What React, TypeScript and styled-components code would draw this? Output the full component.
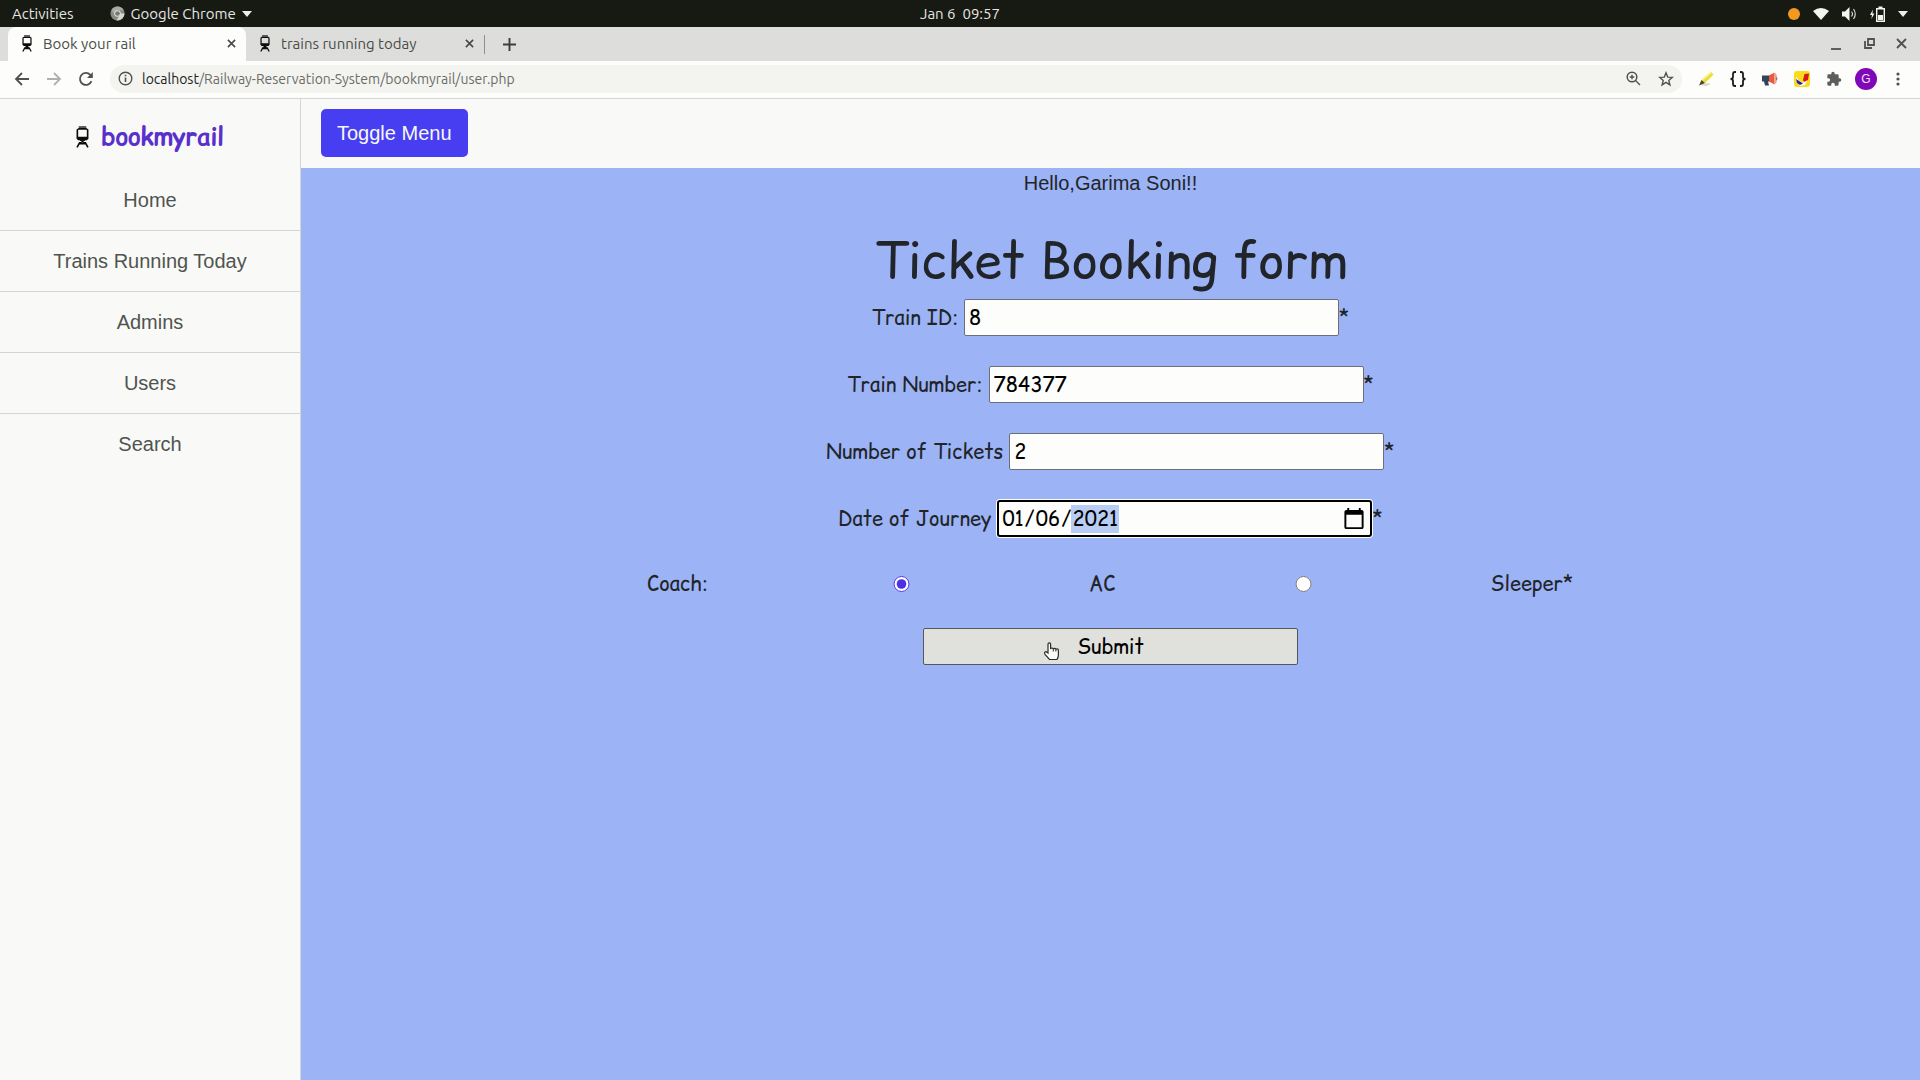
import React from 'react';
import styled, { createGlobalStyle, css } from 'styled-components';

const ui = `Ubuntu, "Noto Sans", sans-serif`;
const sans = `Arial, "Liberation Sans", sans-serif`;
const comic = `"Comic Relief", "Comic Neue", Lato, sans-serif`;

const GlobalStyle = createGlobalStyle`
  *, *::before, *::after { box-sizing: border-box; }
  body { margin: 0; }
`;

const Screen = styled.div`
  display: flex;
  flex-direction: column;
  min-height: 100vh;
  font-family: ${ui};
`;

/* ---------- desktop bar ---------- */

const DesktopBar = styled.header`
  display: grid;
  grid-template-columns: 1fr auto 1fr;
  align-items: center;
  height: 27px;
  padding: 0 12px;
  background: #171913;
  color: #e6e6e2;
  font-size: 15px;
`;

const BarGroup = styled.div<{ $end?: boolean; $gap: number }>`
  display: flex;
  align-items: center;
  justify-content: ${p => (p.$end ? 'flex-end' : 'flex-start')};
  gap: ${p => p.$gap}px;
`;

const BarButton = styled.button`
  display: flex;
  align-items: center;
  gap: 6px;
  padding: 0;
  border: 0;
  background: none;
  color: inherit;
  font: inherit;
  white-space: pre;
`;

/* ---------- browser ---------- */

const TabStrip = styled.div`
  display: flex;
  align-items: center;
  height: 34px;
  padding: 0 10px 0 8px;
  background: #dddedb;
`;

const Tab = styled.div<{ $active?: boolean }>`
  display: flex;
  align-items: center;
  gap: 11px;
  width: 238px;
  height: 34px;
  padding: 0 10px 2px 14px;
  border-radius: 8px 8px 0 0;
  background: ${p => (p.$active ? '#fdfdfb' : 'transparent')};
  color: #4a4c48;
  font-size: 15px;
`;

const TabTitle = styled.span`
  flex: 1;
  white-space: nowrap;
`;

const TabDivider = styled.span`
  width: 1px;
  height: 19px;
  background: #8e908c;
`;

const IconButton = styled.button`
  display: flex;
  align-items: center;
  justify-content: center;
  flex: none;
  padding: 0;
  border: 0;
  background: none;
  color: #50524e;
`;

const NewTab = styled(IconButton)`
  width: 24px;
  margin-left: 12px;
`;

const WindowButtons = styled.div`
  display: flex;
  gap: 17px;
  margin-left: auto;
`;

const Toolbar = styled.div`
  display: flex;
  align-items: center;
  gap: 16px;
  height: 38px;
  padding: 0 14px 2px;
  border-bottom: 1px solid #d5d6d2;
  background: #fdfdfb;
`;

const Address = styled.div`
  display: flex;
  align-items: center;
  flex: 1;
  gap: 17px;
  height: 28px;
  padding: 0 8px;
  border-radius: 14px;
  background: #f3f4f0;
`;

const Url = styled.span`
  flex: 1;
  margin-left: -8px;
  color: #6a6c68;
  font-size: 14px;

  b {
    color: #20221e;
    font-weight: 400;
  }
`;

const Avatar = styled.button`
  width: 22px;
  height: 22px;
  margin: 0 -3px;
  padding: 0;
  border: 0;
  border-radius: 50%;
  background: #8108b8;
  color: #f0e2f6;
  font: 12px/22px ${sans};
`;

/* ---------- page ---------- */

const Page = styled.div`
  display: flex;
  flex: 1;
  color: #212529;
  font-family: ${sans};
  font-size: 20px;
  line-height: 30px;
`;

const Sidebar = styled.aside`
  flex: none;
  width: 301px;
  border-right: 1px solid #d3d6d6;
  background: #f9faf7;
`;

const Brand = styled.div`
  display: flex;
  align-items: center;
  justify-content: center;
  gap: 12px;
  height: 71px;
  padding-top: 4px;
  color: #5930cc;
  font: 700 24px/36px ${comic};
`;

const NavLink = styled.a`
  display: block;
  padding: 15px 20px;
  border-bottom: 1px solid #d3d6d6;
  color: #50544f;
  text-align: center;
  text-decoration: none;

  &:last-child { border-bottom: 0; }
`;

const Main = styled.div`
  display: flex;
  flex: 1;
  flex-direction: column;
  min-width: 0;
  background: #9cb3f6;
`;

const TopNav = styled.nav`
  display: flex;
  align-items: center;
  height: 69px;
  padding: 0 20px 1px;
  background: #f9faf7;
`;

const ToggleButton = styled.button`
  height: 48px;
  padding: 0 16px;
  border: 0;
  border-radius: 5px;
  background: #483ef1;
  color: #f7f7f5;
  font: 20px/30px ${sans};
`;

const Greeting = styled.p`
  margin: 0;
  text-align: center;
`;

const BookingForm = styled.form`
  display: flex;
  flex-direction: column;
  align-items: center;
  gap: 30px;
  font-family: ${comic};
`;

const Title = styled.h1`
  margin: 32px 0 9px;
  font: 400 50px/60px ${comic};
  text-align: center;
`;

const Field = styled.div`
  display: flex;
  align-items: center;
  gap: 6px;
`;

const Star = styled.span`
  margin-left: -6px;
`;

const box = css`
  width: 375px;
  height: 37px;
  border: 1px solid #6c6f78;
  border-radius: 2px;
  font: 20px/30px ${comic};
`;

const TextInput = styled.input<{ $focused?: boolean }>`
  ${box}
  padding: 1px 4px;
  background: #fdfdfb;
  color: #000;
  outline: 0;
  ${p => p.$focused && css`
    border: 2px solid #000;
    border-radius: 3px;
    padding: 0 2px;
    box-shadow: 0 0 0 1px #fdfdfb;
  `}

  &::-webkit-datetime-edit-fields-wrapper { padding: 0; }
  &::-webkit-datetime-edit-month-field,
  &::-webkit-datetime-edit-day-field,
  &::-webkit-datetime-edit-year-field { padding: 0 1px; }
  &::-webkit-datetime-edit-year-field { background: #b7cdf3; color: #000; }
  &::-webkit-calendar-picker-indicator { width: 24px; height: 24px; padding: 0 2px; }
`;

const CoachRow = styled.fieldset`
  display: flex;
  align-items: center;
  height: 31px;
  margin: 0;
  padding: 2px 0 0;
  border: 0;
`;

const CoachLabel = styled.span`
  margin-right: 6px;
`;

const Radio = styled.input`
  width: 375px;
  height: 16px;
  margin: 0;
  accent-color: #4b32e6;
`;

const SubmitWrap = styled.div`
  position: relative;
`;

const Submit = styled.button`
  ${box}
  border-color: #55575a;
  background: #e0e1dc;
  color: #000;
`;

const Pointer = styled.svg`
  position: absolute;
  top: 14px;
  left: 120px;
`;

/* ---------- drawings ---------- */

const Train = ({ h = 17 }: { h?: number }) => (
  <svg width={Math.round(h * 0.6)} height={h} viewBox="0 0 12 20" aria-hidden="true">
    <path d="M2.500 .8h7" stroke="#20221e" strokeWidth="1.300" />
    <path fillRule="evenodd" fill="#0c0d0b" d="M2.500 1.600h7L11.500 3v8.500L10 13H2L.5 11.500V3zM2 3.400v6.400h8V3.400z" />
    <path d="M3.800 12.500 8.800 16M8.200 12.500 3.200 16M3.500 15 1 19.600M8.500 15l2.500 4.600M3 16.200h6" stroke="#0c0d0b" strokeWidth="1.500" />
  </svg>
);

const Cross = ({ s = 9 }: { s?: number }) => (
  <svg width={s} height={s} viewBox="0 0 10 10"><path d="m1 1 8 8M9 1 1 9" stroke="#454743" strokeWidth="1.700" /></svg>
);

const Caret = () => (
  <svg width="10" height="6" viewBox="0 0 10 6"><path d="M0 0h10L5 6z" fill="#eeeeea" /></svg>
);

const line = { fill: 'none', stroke: 'currentColor', strokeWidth: 1.8 } as const;

const links = ['Home', 'Trains Running Today', 'Admins', 'Users', 'Search'];
const fields = [
  { id: 'train-id', label: 'Train ID:', value: '8' },
  { id: 'train-number', label: 'Train Number:', value: '784377' },
  { id: 'tickets', label: 'Number of Tickets', value: '2' },
  { id: 'journey', label: 'Date of Journey', value: '2021-01-06', type: 'date' },
];

export default function App() {
  return (
    <Screen>
      <GlobalStyle />
      <DesktopBar>
        <BarGroup $gap={36}>
          <BarButton>Activities</BarButton>
          <BarButton>
            <svg width="15" height="15" viewBox="0 0 16 16">
              <circle cx="8" cy="8" r="7.500" fill="#8b8b86" />
              <path d="M8 8h7.500A7.500 7.500 0 0 1 7 15.400L10.500 9z" fill="#d6d6cf" />
              <path d="M8 4.500h6.600A7.500 7.500 0 0 0 1.500 4.300L5 9z" fill="#a9a9a3" />
              <circle cx="8" cy="8" r="3.500" fill="#dededa" />
              <circle cx="8" cy="8" r="2.500" fill="#777872" />
            </svg>
            Google Chrome
            <Caret />
          </BarButton>
        </BarGroup>
        <BarButton>{'Jan 6  09:57'}</BarButton>
        <BarGroup $end $gap={13}>
          <svg width="12" height="12" viewBox="0 0 12 12"><circle cx="6" cy="6" r="6" fill="#f29a1e" /></svg>
          <svg width="16" height="12" viewBox="0 0 16 12"><path d="M8 12 0 3q8-6 16 0z" fill="#f4f4ef" /></svg>
          <svg width="15" height="14" viewBox="0 0 15 14">
            <path d="M0 4.500h3L7.500 0v14L3 9.500H0z" fill="#f4f4ef" />
            <path d="M9.500 4.500q2 2.500 0 5M11.500 2q3.500 5 0 10" fill="none" stroke="#d6d6d0" strokeWidth="1.200" />
          </svg>
          <svg width="15" height="16" viewBox="0 0 15 16">
            <path d="M3 3.500 0 9h2l-.6 4L4.400 7.500h-2z" fill="#f4f4ef" />
            <path d="M6.700 2.700h7.600v12.600H6.700zM8.500 1.200h4" fill="none" stroke="#f4f4ef" strokeWidth="1.400" />
            <path d="M8 9h5v5H8z" fill="#f4f4ef" />
          </svg>
          <Caret />
        </BarGroup>
      </DesktopBar>

      <TabStrip>
        <Tab $active>
          <Train />
          <TabTitle>Book your rail</TabTitle>
          <IconButton aria-label="Close tab"><Cross /></IconButton>
        </Tab>
        <Tab>
          <Train />
          <TabTitle>trains running today</TabTitle>
          <IconButton aria-label="Close tab"><Cross /></IconButton>
        </Tab>
        <TabDivider />
        <NewTab aria-label="New tab">
          <svg width="13" height="13" viewBox="0 0 13 13"><path d="M6.500 0v13M0 6.500h13" stroke="#3c3e3a" strokeWidth="1.900" /></svg>
        </NewTab>
        <WindowButtons>
          <IconButton aria-label="Minimise">
            <svg width="16" height="12" viewBox="0 0 16 12"><path d="M3 11h10" {...line} /></svg>
          </IconButton>
          <IconButton aria-label="Restore">
            <svg width="16" height="12" viewBox="0 0 16 12"><path d="M7 1h6v6H7zM4 3v7h7" {...line} /></svg>
          </IconButton>
          <IconButton aria-label="Close"><svg width="16" height="12" viewBox="0 0 16 12"><path d="m3 1 9 9M12 1l-9 9" {...line} /></svg></IconButton>
        </WindowButtons>
      </TabStrip>

      <Toolbar>
        <IconButton aria-label="Back">
          <svg width="16" height="14" viewBox="0 0 16 14"><path d="M8 1 2 7l6 6M2 7h13" {...line} /></svg>
        </IconButton>
        <IconButton aria-label="Forward">
          <svg width="16" height="14" viewBox="0 0 16 14"><path d="m8 1 6 6-6 6M14 7H1" {...line} stroke="#b0b0ae" /></svg>
        </IconButton>
        <IconButton aria-label="Reload">
          <svg width="16" height="16" viewBox="0 0 16 16"><path d="M13.500 10.200A6 6 0 1 1 12.300 3.800L14 5.500" {...line} /><path d="M14.800 1v6H9z" fill="currentColor" /></svg>
        </IconButton>
        <Address>
          <IconButton aria-label="Site information">
            <svg width="15" height="15" viewBox="0 0 15 15"><circle cx="7.500" cy="7.500" r="6.300" {...line} strokeWidth="1.400" /><path d="M7.500 6.500V11M7.500 3.700v1.600" {...line} strokeWidth="1.600" /></svg>
          </IconButton>
          <Url><b>localhost</b>/Railway-Reservation-System/bookmyrail/user.php</Url>
          <IconButton aria-label="Zoom">
            <svg width="15" height="15" viewBox="0 0 15 15"><circle cx="6" cy="6" r="4.800" {...line} strokeWidth="1.500" /><path d="m9.500 9.500 4.500 4.500M6 3.700v4.600M3.700 6h4.600" {...line} strokeWidth="1.400" /></svg>
          </IconButton>
          <IconButton aria-label="Bookmark">
            <svg width="16" height="16" viewBox="0 0 16 16"><path d="m8 1.800 1.700 4.300 4.600.3-3.500 3 1.100 4.500L8 11.400l-3.900 2.500 1.100-4.500-3.500-3 4.600-.3z" {...line} strokeWidth="1.400" /></svg>
          </IconButton>
        </Address>
        <IconButton aria-label="Highlighter">
          <svg width="16" height="16" viewBox="0 0 16 16">
            <path d="M2 14q6-3 11-1l-5 2z" fill="#d6d6ce" />
            <path d="m13 1 2.500 2.500L7 12l-3.500-3z" fill="#f0dc28" />
            <path d="M13 1 3.500 9l1 1L14 2z" fill="#f9ef80" />
            <path d="M3.500 9 7 12l-6 2.500z" fill="#48452a" />
          </svg>
        </IconButton>
        <IconButton aria-label="JSON viewer">
          <svg width="16" height="16" viewBox="0 0 16 16"><path d="M6 1H5Q3 1 3 3v3q0 2-2.500 2Q3 8 3 10v3q0 2 2 2h1M10 1h1q2 0 2 2v3q0 2 2.500 2Q13 8 13 10v3q0 2-2 2h-1" {...line} stroke="#1c1d1b" /></svg>
        </IconButton>
        <IconButton aria-label="Announcements">
          <svg width="16" height="16" viewBox="0 0 16 16">
            <path d="M0 4.500h8v6H6l1 4H3l-1-4H0z" fill="#31445c" />
            <path d="m7 4.500 5.500-3v12l-5.500-3z" fill="#ea5a3c" />
            <path d="M12.500 2q2.500 0 2.500 5.500t-2.500 5.500z" fill="#f4a08c" />
            <path d="M14.500 5.500q1.500 2 0 4z" fill="#31445c" />
          </svg>
        </IconButton>
        <IconButton aria-label="Page marker">
          <svg width="16" height="16" viewBox="0 0 16 16">
            <rect width="16" height="16" rx="3" fill="#f8dc1c" />
            <path d="m2.500 6 2 3 4.500 3 1-3 4-1-3 6-5 1-4-5z" fill="#fff" />
            <path d="m10.500 3 4.500-.5L14 9l-4 2-1-2z" fill="#d81818" />
            <path d="m2 8 7 4.500L6 14 3 12z" fill="#31209c" />
          </svg>
        </IconButton>
        <IconButton aria-label="Extensions">
          <svg width="16" height="16" viewBox="0 0 24 24"><path fill="#5c5e5a" d="M20.500 11H19V7a2 2 0 0 0-2-2h-4V3.500a2.500 2.500 0 0 0-5 0V5H4a2 2 0 0 0-2 2v3.800h1.500a2.700 2.700 0 0 1 0 5.400H2V20a2 2 0 0 0 2 2h3.800v-1.500a2.700 2.700 0 0 1 5.400 0V22H17a2 2 0 0 0 2-2v-4h1.500a2.500 2.500 0 0 0 0-5z" /></svg>
        </IconButton>
        <Avatar aria-label="Profile G">G</Avatar>
        <IconButton aria-label="Menu">
          <svg width="16" height="16" viewBox="0 0 16 16" fill="currentColor"><circle cx="8" cy="3" r="1.600" /><circle cx="8" cy="8" r="1.600" /><circle cx="8" cy="13" r="1.600" /></svg>
        </IconButton>
      </Toolbar>

      <Page>
        <Sidebar>
          <Brand><Train h={22} />bookmyrail</Brand>
          <nav>
            {links.map(text => <NavLink key={text} href="#">{text}</NavLink>)}
          </nav>
        </Sidebar>
        <Main>
          <TopNav><ToggleButton>Toggle Menu</ToggleButton></TopNav>
          <Greeting>Hello,Garima Soni!!</Greeting>
          <Title>Ticket Booking form</Title>
          <BookingForm onSubmit={e => e.preventDefault()}>
            {fields.map(f => (
              <Field key={f.id}>
                <label htmlFor={f.id}>{f.label}</label>
                <TextInput id={f.id} type={f.type || 'text'} defaultValue={f.value} $focused={f.type === 'date'} />
                <Star>*</Star>
              </Field>
            ))}
            <CoachRow>
              <CoachLabel>Coach:</CoachLabel>
              <Radio type="radio" name="coach" id="ac" defaultChecked />
              <label htmlFor="ac">AC</label>
              <Radio type="radio" name="coach" id="sleeper" />
              <label htmlFor="sleeper">Sleeper*</label>
            </CoachRow>
            <SubmitWrap>
              <Submit type="submit">Submit</Submit>
              <Pointer width="18" height="19" viewBox="0 0 18 19" aria-hidden="true">
                <path d="M5 11V2.200Q5 .8 6.300.8T7.600 2.200V7q.3-1 1.300-1t1.400 1.100q.4-.8 1.300-.8t1.300 1.100q.4-.6 1.200-.6 1.300 0 1.300 1.600V13q0 2.500-1.500 4.500H6.500L2 12.300Q1 10.800 2 10t2 .3z" fill="#fdfdfb" stroke="#2b2c29" strokeWidth="1.200" />
                <path d="M10.300 7.500v2M12.900 8v1.500" stroke="#2b2c29" />
              </Pointer>
            </SubmitWrap>
          </BookingForm>
        </Main>
      </Page>
    </Screen>
  );
}
